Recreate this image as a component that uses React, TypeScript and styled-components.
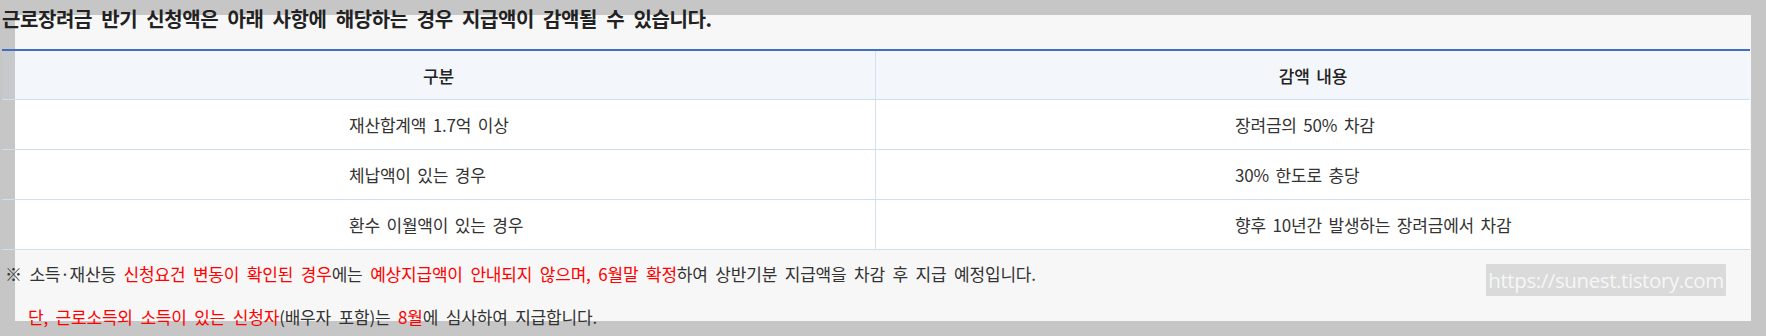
import { Fragment } from 'react'
import styled, { createGlobalStyle } from 'styled-components'

const GlobalStyle = createGlobalStyle`
  html, body {
    margin: 0;
    padding: 0;
    background: #c6c6c6;
  }
`

const Frame = styled.div`
  width: 1766px;
  height: 336px;
  box-sizing: border-box;
  padding: 15px;
  background: #c6c6c6;
  overflow: hidden;
  font-family: 'Noto Sans CJK KR', 'Noto Sans', sans-serif;
  color: #333;
`

// flow-root keeps the heading's negative margin inside the panel
const Panel = styled.div`
  display: flow-root;
  position: relative;
  height: 306px;
  background: #f7f7f7;
`

const Heading = styled.h3`
  margin: -10px 0 0 -13px;
  font-size: 20px;
  line-height: 28px;
  font-weight: 700;
  letter-spacing: -0.4px;
  word-spacing: 5px;
  color: #222;
  white-space: nowrap;
`

const Table = styled.div`
  display: grid;
  grid-template-columns: 874px 874px;
  margin: 16px 0 0 -13px;
  width: 1748px;
  border-top: 2px solid #3f6fc0;
`

const Cell = styled.div<{ $head?: boolean; $first?: boolean }>`
  box-sizing: border-box;
  height: ${({ $head }) => ($head ? '49px' : '50px')};
  display: flex;
  align-items: center;
  justify-content: ${({ $head }) => ($head ? 'center' : 'flex-start')};
  padding-left: ${({ $head, $first }) => ($head ? '0' : $first ? '347px' : '359px')};
  font-size: 17px;
  letter-spacing: -0.2px;
  word-spacing: 3px;
  font-weight: ${({ $head }) => ($head ? 500 : 400)};
  color: ${({ $head }) => ($head ? '#222' : '#333')};
  border-bottom: 1px solid #cddff0;
  border-right: ${({ $first }) => ($first ? '1px solid #d3e1f0' : 'none')};
  background: ${({ $head, $first }) => {
    const bg = $head ? '#f3f6fa' : '#fff'
    const strip = $head ? '#c7cacd' : '#c6c6c6'
    return $first ? `linear-gradient(to right, ${strip} 13px, ${bg} 13px)` : bg
  }};
  white-space: nowrap;
`

const Note = styled.p<{ $indent?: boolean }>`
  margin: ${({ $indent }) => ($indent ? '17px 0 0 13px' : '11px 0 0 -10px')};
  font-size: 17px;
  line-height: 26px;
  letter-spacing: -0.2px;
  word-spacing: 4px;
  color: #333;
  white-space: nowrap;
`

const Red = styled.span`
  color: #ff0000;
`

const Watermark = styled.div`
  position: absolute;
  top: 249px;
  right: 25px;
  width: 240px;
  height: 32px;
  display: flex;
  align-items: center;
  justify-content: center;
  background: #dadada;
  color: #f6f6f6;
  font-family: 'Open Sans', 'DejaVu Sans', sans-serif;
  font-size: 20.5px;
  letter-spacing: -0.4px;
  white-space: nowrap;
`

const rows = [
  ['재산합계액 1.7억 이상', '장려금의 50% 차감'],
  ['체납액이 있는 경우', '30% 한도로 충당'],
  ['환수 이월액이 있는 경우', '향후 10년간 발생하는 장려금에서 차감'],
]

export default function App() {
  return (
    <>
      <GlobalStyle />
      <Frame>
        <Panel>
          <Heading>근로장려금 반기 신청액은 아래 사항에 해당하는 경우 지급액이 감액될 수 있습니다.</Heading>
          <Table>
            <Cell $head $first>구분</Cell>
            <Cell $head>감액 내용</Cell>
            {rows.map(([a, b]) => (
              <Fragment key={a}>
                <Cell $first>{a}</Cell>
                <Cell>{b}</Cell>
              </Fragment>
            ))}
          </Table>
          <Note>
            ※ 소득·재산등 <Red>신청요건 변동이 확인된 경우</Red>에는{' '}
            <Red>예상지급액이 안내되지 않으며, 6월말 확정</Red>하여 상반기분 지급액을 차감 후 지급 예정입니다.
          </Note>
          <Note $indent>
            <Red>단, 근로소득외 소득이 있는 신청자</Red>(배우자 포함)는 <Red>8월</Red>에 심사하여 지급합니다.
          </Note>
          <Watermark>https://sunest.tistory.com</Watermark>
        </Panel>
      </Frame>
    </>
  )
}
